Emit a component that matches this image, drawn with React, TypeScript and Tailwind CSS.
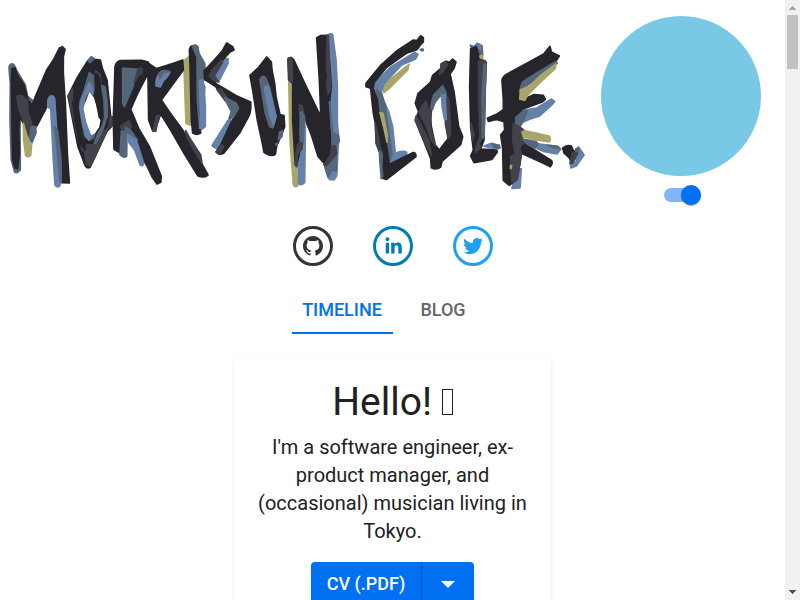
import { useState } from "react";

const INK = "#25252b";
const SOOT = "#42424b";
const SLATE = "#566679";
const BLUE = "#6681a9";
const OLIVE = "#a8a66b";

type Mark = [string, string];

// Brush marks, painted back to front. x is the group's offset on the canvas.
const artwork: { x: number; marks: Mark[] }[] = [
  {
    x: 0,
    marks: [
      [SLATE, "M27 142Q29 130 38 132Q45 135 49 150L76 195L82 228L98 242L100 300L60 290L61 450Q50 462 44 456L34 420L30 300L31 190Z"],
      [INK, "M36 146L45 144L52 165L72 195L84 240L96 256L108 225L140 150L160 120L178 84L187 80L195 88L190 110L190 160L196 250L202 400L208 489L184 488L178 440L168 320L166 240L158 226L146 232L140 262L112 315L88 350L70 310L60 290L56 330L58 400L53 446L45 444L38 420L36 300L34 180Z"],
      [SOOT, "M50 228L66 226L82 242L84 275L92 300L96 318L98 350L90 366L80 340L66 290L56 265Z"],
      [SLATE, "M94 320L107 320L108 338L96 368L88 355Z"],
      [OLIVE, "M70 310L80 345L90 368L95 374L92 406Q84 414 77 406L71 360Z"],
      [BLUE, "M144 240Q148 226 158 228Q166 232 165 250L170 330L182 440L180 497Q172 505 165 496L160 420L154 300L152 266L143 261Z"],
      [SLATE, "M164 320L173 332L183 420L184 486L180 484L172 400Z"],
      [INK, "M204 228L232 172L262 124L274 111L284 118L301 120L307 145L321 180L328 250L332 290L340 292L336 318L320 335L284 413L270 442Q262 447 256 438L234 380L220 310ZM268 210L246 265L253 300L260 330L274 350L287 342L300 322L304 300L296 270L284 232Z"],
      [SLATE, "M264 122L274 111L282 117L270 128Z"],
      [SOOT, "M206 225L218 208L217 235L228 290L244 345L256 385L247 393L229 335ZM252 376L284 374L310 337L326 322L284 410L270 438L259 434ZM286 152L300 162L303 190L300 240L292 230L286 200Z"],
      [INK, "M218 245L228 262L230 290L238 310L242 345L254 370L256 390L240 372L228 320ZM288 160L298 175L302 200L300 236L306 250L306 300L298 292L290 250L282 215Z"],
      [SLATE, "M268 158L279 166L282 205L279 224L268 210L254 235L247 265L254 300L261 330L274 350L284 344L279 355L268 360L255 350L247 310L240 270L240 245L251 215Z"],
      [SLATE, "M305 197L315 200L322 250L322 288L307 333L287 369L283 370L293 342L308 317L314 290L312 240Z"],
      [BLUE, "M268 188L278 206L278 222L268 210L254 235L248 265L256 305L272 348L267 360L256 345L246 300L240 262L244 240Z"],
      [SOOT, "M331 289L342 292L336 316L327 320Z"],
      [INK, "M345 141Q348 124 362 122L425 121L444 126L458 150L440 168L413 220L392 268L416 325L448 380L484 470L482 487L471 492L456 470L442 440L427 415L402 355L387 330L363 325L362 400L342 388L340 300Z"],
      [SLATE, "M368 144L414 148L422 154L404 178L399 200L385 232L373 260L368 250Z"],
      [SOOT, "M413 150L425 144L426 156L411 172L403 188ZM362 318L387 303L394 320L380 338L366 333Z"],
      [SLATE, "M364 334L381 334L380 409Q370 415 360 404ZM376 322L391 330L412 360L400 366L382 346Z"],
      [BLUE, "M383 344L409 360L431 430Q429 440 421 436L404 390L387 368Z"],
    ],
  },
  {
    x: 420,
    marks: [
      [OLIVE, "M131 122L150 108L153 314Q146 316 138 309L134 200Z"],
      [INK, "M0 126L22 128L50 146L100 130L128 120L130 150L108 180L64 240L88 275L128 330L168 400L204 465Q190 476 173 467L132 400L92 330L62 282L49 320L47 332L38 332L26 300L24 170L16 160L0 190Z"],
      [SOOT, "M0 143L7 146L5 160L0 164ZM50 287L58 287L51 312L47 334L39 333ZM137 332L149 354L182 405L186 430L162 390L140 350Z"],
      [BLUE, "M48 185Q54 154 72 152L90 156L82 170L70 182L61 201L48 198Z"],
      [SLATE, "M56 163Q64 152 74 152L88 154L70 158L60 176Z"],
      [INK, "M148 90Q151 76 160 78L173 100L173 250L182 339Q170 347 158 339L154 300L150 130Z"],
      [SLATE, "M157 78Q168 71 174 82L177 100L194 130L196 160L189 190L194 200L191 320L179 326L177 300L172 240L171 110Z"],
      [BLUE, "M178 180L189 180L196 260L196 319L186 328L180 324L182 280Z"],
      [BLUE, "M216 377L263 302L272 296L270 320L238 389L222 382ZM210 172L251 117L264 116L264 130L236 185L216 182Z"],
      [INK, "M192 153L217 126L246 94L260 69L278 80L282 90L270 96L254 114L206 168L231 193L289 227L332 246Q334 270 328 285L299 339L251 400Q237 407 228 396L242 375L272 310L292 275L270 243L236 214L227 200L194 179Z"],
      [SOOT, "M208 168L216 151L245 121L248 126L223 168L236 186L216 178ZM230 207L243 207L261 234L283 248L275 250L256 243ZM229 395L244 375L251 380L238 403Z"],
      [SLATE, "M253 232L289 250L296 265L279 293L267 296L274 275L263 254Z"],
      [INK, "M330 166L356 142L380 111L394 126L396 150L404 190L408 230L420 284L432 287L434 320L422 350L410 378L406 403Q394 412 372 397L368 375L352 300L338 210Z"],
      [SLATE, "M360 180Q366 161 377 174L388 200L408 290L399 323L389 320L376 280ZM418 337L428 332L426 350L415 360ZM406 372L412 370L410 376Z"],
      [BLUE, "M373 205Q381 190 388 206L408 290L400 315L390 288Z"],
    ],
  },
  {
    x: 810,
    marks: [
      [BLUE, "M174 44Q182 39 188 44L198 120L202 200L202 310L206 350L200 468L192 480L178 478L172 460L178 300Z"],
      [OLIVE, "M56 170L68 188L68 330L78 440L83 498Q74 503 70 495L60 360Z"],
      [INK, "M140 53L151 47L171 46L178 120L184 200L178 250L180 330L188 350L198 400L168 436L144 409L124 345L106 300L97 258L86 258L90 350L94 380L81 438L76 436L68 300L68 190L56 179L54 116Q63 108 71 119L107 196L149 283L152 275L148 180Z"],
      [SOOT, "M54 119Q60 109 66 116L67 184L58 182ZM171 46L175 46L178 130L182 205L174 222L170 190L174 170L170 150ZM88 254L97 257L103 290L96 276L88 275Z"],
      [SLATE, "M178 245L188 337L205 346L208 364L198 378L200 453L186 450L174 472L164 440L186 400L186 350Z"],
      [SOOT, "M184 378L197 378L200 402L170 436L161 434L182 405Z"],
      [BLUE, "M94 276L103 291L106 330L104 487Q95 497 86 492L84 440L94 400Z"],
      [SLATE, "M91 278L103 290L99 370L92 392L90 340Z"],
      [SOOT, "M84 372L95 368L96 386L83 402L80 440L77 436L78 400Z"],
      [OLIVE, "M338 210L349 187L417 133L413 150L359 204L342 218Z"],
      [BLUE, "M312 192L361 142L435 97L444 103L437 117L395 135L343 190L334 215L342 245L356 275L368 320L376 400Q398 390 410 397L409 409L362 438L352 390L334 300L322 230Z"],
      [SLATE, "M320 208L334 223L346 255L348 280L356 330L366 405L359 420L352 350L340 280L326 272ZM451 88L459 87L460 91L454 92Z"],
      [INK, "M288 190L331 137L381 92L430 60L440 62L452 47L460 53L460 66L451 75L441 89L409 100L349 143L312 188L310 205L322 240L326 278L343 330L358 433L428 398Q438 395 438 410L350 478L334 474L338 460L330 400L320 370L316 310L310 280L302 205L288 200Z"],
      [SOOT, "M316 312L323 340L329 378L338 400L328 394L318 370Z"],
      [SLATE, "M328 393L337 404L335 440L338 470L334 475L330 430Z"],
      [OLIVE, "M330 278L339 280L352 345L351 367L343 330Z"],
    ],
  },
  {
    x: 1200,
    marks: [
      [INK, "M46 250L54 221L92 186L98 166L122 146L124 131L138 124L148 127L158 117L168 126L162 145L150 162L162 215L176 320L188 350L182 374L126 424L122 441Q108 451 94 443L92 415L64 345L46 300L56 275ZM126 220L102 250L90 280L94 320L106 376L118 390L144 356L142 330L136 290L136 250Z"],
      [SOOT, "M124 132L138 126L142 135L126 158L119 163L122 146ZM62 265L78 242L84 265L94 275L91 320L105 376L92 358L80 320L58 280ZM48 288L66 320L87 365L94 406L66 350L46 302ZM139 227L147 240L152 344L144 354L136 310Z"],
      [SLATE, "M100 226L128 197L138 218L138 233L124 223L106 244L97 270L92 262Z"],
      [BLUE, "M124 226L135 224L139 299L134 300L127 265Z"],
      [SLATE, "M211 76L222 80L232 70L246 77L248 105L240 110L230 84L214 82Z"],
      [BLUE, "M230 74Q238 68 242 77L242 90L236 84Z"],
      [INK, "M212 86L229 80L238 113L258 126L256 200L252 360L242 387L290 390L292 396L276 418L222 428L212 408L220 390L212 320L209 200Z"],
      [SOOT, "M236 124L255 122L258 140L256 190L249 205L244 360L237 370L242 382L226 398L228 382L240 350L236 240ZM213 310L222 345L217 362Z"],
      [SLATE, "M252 132L257 132L256 185L252 350L247 355L246 230Z"],
      [OLIVE, "M240 108L248 106L248 116L241 114Z"],
      [BLUE, "M252 378L275 370L298 377L296 386L266 383Z"],
      [SLATE, "M276 372L298 376L300 384L288 386Z"],
      [BLUE, "M336 505L340 486L352 470L356 447L364 446L360 504Z"],
      [INK, "M306 181Q306 172 321 162L386 127L431 102L450 79L454 96L478 108L469 122L399 163L366 185L356 215L362 242L400 224L430 226L436 238L427 246L371 266L343 295L343 310L370 330L366 350L373 370L454 421Q460 430 451 440L430 430L364 400L360 430L350 479L328 496L310 481L308 385L302 345L314 330L312 305L290 298L265 304L262 295L291 282L310 269L310 240Z"],
      [SLATE, "M358 215L367 187L385 174L465 126L472 129L404 180L370 205Z"],
      [OLIVE, "M359 237L362 209L391 197L421 167L468 132L466 145L424 184L384 224L374 241Z"],
      [BLUE, "M362 282L373 270L410 264L455 237L464 245L454 256L419 288L389 298L362 310Z"],
      [SLATE, "M347 293L372 270L382 273L372 300L360 320L347 308Z"],
      [SOOT, "M340 310L359 321L372 331L363 345L370 370L358 382L364 403L351 480L336 486L332 410L346 400L338 360Z"],
      [OLIVE, "M366 336Q371 330 384 334L447 348Q454 353 448 366L410 360L370 351ZM332 436L335 437L333 446L331 445Z"],
      [BLUE, "M386 366L420 372L474 380L482 388L471 402L430 394L388 376Z"],
      [SLATE, "M368 357L409 365L414 372L405 384L380 371ZM442 376L471 378L480 386L462 384Z"],
      [BLUE, "M522 395L536 381L552 405L529 438L513 444L510 431L530 425Z"],
      [INK, "M488 384Q500 373 514 378L520 391L532 399L516 430L508 414L492 399Z"],
      [SOOT, "M518 397L532 401L519 428L510 429Z"],
      [SLATE, "M528 386L535 383L536 396L527 394Z"],
    ],
  },
];

function Wordmark() {
  return (
    <svg viewBox="24 -12 1731 540" className="min-w-0 flex-1" role="img" aria-label="Morrison Cole">
      {artwork.map(group => (
        <g key={group.x} transform={`translate(${group.x} 0)`} strokeWidth="5" strokeLinejoin="round">
          {group.marks.map(([color, d], i) => (
            <path key={i} d={d} fill={color} stroke={color} fillRule="evenodd" />
          ))}
        </g>
      ))}
    </svg>
  );
}

function ThemeSwitch() {
  const [on, setOn] = useState(true);
  return (
    <label className="relative mt-2 flex h-[22px] w-[34px] cursor-pointer items-center">
      <input
        type="checkbox"
        role="switch"
        aria-label="Animate background"
        checked={on}
        onChange={e => setOn(e.target.checked)}
        className="peer h-3.5 w-[34px] appearance-none rounded-full bg-black/40 checked:bg-[#80b6f9]"
      />
      <span className="pointer-events-none absolute -left-[3px] size-5 rounded-full bg-gray-100 shadow-[0_2px_1px_-1px_rgba(0,0,0,0.2),0_1px_1px_rgba(0,0,0,0.14),0_1px_3px_rgba(0,0,0,0.12)] peer-checked:left-[17px] peer-checked:bg-[#0070f3]" />
    </label>
  );
}

const socials = [
  {
    name: "GitHub",
    href: "#github",
    style: "text-[#333333]",
    d: "M32,16c-8.8,0-16,7.2-16,16c0,7.1,4.6,13.1,10.9,15.2c0.8,0.1,1.1-0.3,1.1-0.8c0-0.4,0-1.4,0-2.7c-4.5,1-5.4-2.1-5.4-2.1c-0.7-1.8-1.8-2.3-1.8-2.3c-1.5-1,0.1-1,0.1-1c1.6,0.1,2.5,1.6,2.5,1.6c1.4,2.4,3.7,1.7,4.7,1.3c0.1-1,0.6-1.7,1-2.1c-3.6-0.4-7.3-1.8-7.3-7.9c0-1.7,0.6-3.2,1.6-4.3c-0.2-0.4-0.7-2,0.2-4.2c0,0,1.3-0.4,4.4,1.6c1.3-0.4,2.6-0.5,4-0.5c1.4,0,2.7,0.2,4,0.5c3.1-2.1,4.4-1.6,4.4-1.6c0.9,2.2,0.3,3.8,0.2,4.2c1,1.1,1.6,2.5,1.6,4.3c0,6.1-3.7,7.5-7.3,7.9c0.6,0.5,1.1,1.5,1.1,3c0,2.1,0,3.9,0,4.4c0,0.4,0.3,0.9,1.1,0.8C43.4,45.1,48,39.1,48,32C48,23.2,40.8,16,32,16z",
  },
  {
    name: "LinkedIn",
    href: "#linkedin",
    style: "text-[#007bb6]",
    d: "M20.4,44h5.4V26.6h-5.4V44z M23.1,18c-1.7,0-3.1,1.4-3.1,3.1c0,1.7,1.4,3.1,3.1,3.1c1.7,0,3.1-1.4,3.1-3.1C26.2,19.4,24.8,18,23.1,18z M39.5,26.2c-2.6,0-4.4,1.4-5.1,2.8h-0.1v-2.4h-5.2V44h5.4v-8.6c0-2.3,0.4-4.5,3.2-4.5c2.8,0,2.8,2.6,2.8,4.6V44H46v-9.5C46,29.8,45,26.2,39.5,26.2z",
  },
  {
    name: "Twitter",
    href: "#twitter",
    style: "text-[#1da1f2]",
    d: "M48,22.1c-1.2,0.5-2.4,0.9-3.8,1c1.4-0.8,2.4-2.1,2.9-3.6c-1.3,0.8-2.7,1.3-4.2,1.6C41.7,19.8,40,19,38.2,19c-3.6,0-6.6,2.9-6.6,6.6c0,0.5,0.1,1,0.2,1.5c-5.5-0.3-10.3-2.9-13.5-6.9c-0.6,1-0.9,2.1-0.9,3.3c0,2.3,1.2,4.3,2.9,5.5c-1.1,0-2.1-0.3-3-0.8c0,0,0,0.1,0,0.1c0,3.2,2.3,5.8,5.3,6.4c-0.6,0.1-1.1,0.2-1.7,0.2c-0.4,0-0.8,0-1.2-0.1c0.8,2.6,3.3,4.5,6.1,4.6c-2.2,1.8-5.1,2.8-8.2,2.8c-0.5,0-1.1,0-1.6-0.1c2.9,1.9,6.4,2.9,10.1,2.9c12.1,0,18.7-10,18.7-18.7c0-0.3,0-0.6,0-0.8C46,24.5,47.1,23.4,48,22.1z",
  },
];

function Scrollbar() {
  return (
    <div aria-hidden="true" className="flex w-[15px] shrink-0 flex-col items-center justify-between bg-[#f1f1f1]">
      <div className="flex flex-col items-center">
        <svg width="15" height="15" shapeRendering="crispEdges">
          <path d="M4 10h7v-1h-1v-1h-1v-1h-1v-1h-1v1h-1v1h-1v1h-1z" fill="#a3a3a3" />
        </svg>
        <div className="h-[54px] w-[11px] bg-[#c1c1c1]" />
      </div>
      <svg width="15" height="15" shapeRendering="crispEdges">
        <path d="M4 5h7v1h-1v1h-1v1h-1v1h-1v-1h-1v-1h-1v-1h-1z" fill="#505050" />
      </svg>
    </div>
  );
}

export default function App() {
  const [tab, setTab] = useState("Timeline");

  return (
    <div className="flex h-screen overflow-hidden bg-white font-[Roboto,sans-serif] text-[#212121]">
      <main className="flex min-w-0 flex-1 flex-col items-center">
        <header className="flex w-full items-start gap-4 pt-4 pr-6 pl-2">
          <Wordmark />
          <div className="flex shrink-0 flex-col items-center">
            <div className="size-40 rounded-full bg-[#78c8e6]" />
            <ThemeSwitch />
          </div>
        </header>

        <nav aria-label="Social" className="mt-5 flex gap-10">
          {socials.map(s => (
            <a key={s.name} href={s.href} aria-label={s.name} className={`size-10 ${s.style}`}>
              <svg viewBox="0 0 64 64" className="size-10" fill="currentColor">
                <circle cx="32" cy="32" r="29.6" fill="none" stroke="currentColor" strokeWidth="4.8" />
                <path d={s.d} />
              </svg>
            </a>
          ))}
        </nav>

        <div role="tablist" className="mt-5 flex">
          {["Timeline", "Blog"].map(t => (
            <button
              key={t}
              role="tab"
              aria-selected={tab === t}
              onClick={() => setTab(t)}
              className={`h-12 w-[101px] border-b-2 pt-0.5 text-lg font-medium uppercase ${
                tab === t ? "border-[#0070f3] text-[#0070f3]" : "border-transparent text-[#666666]"
              }`}
            >
              {t}
            </button>
          ))}
        </div>

        <section className="mt-6 flex w-[317px] shrink-0 flex-col items-center rounded px-4 pt-[18px] pb-8 text-center shadow-[0_2px_1px_-1px_rgba(0,0,0,0.06),0_1px_1px_rgba(0,0,0,0.05),0_1px_3px_rgba(0,0,0,0.12)]">
          <h1 className="text-[39px] leading-[53px]">
            Hello! <span role="img" aria-label="wave" className="inline-block h-[26px] w-[11px] border border-[#212121]" />
          </h1>
          <p className="mt-1 text-xl leading-7">
            I'm a software engineer, ex-product manager, and (occasional) musician living in Tokyo.
          </p>
          <div className="mt-[17px] flex h-11 overflow-hidden rounded bg-[#0070f3] text-lg font-medium text-white shadow-md">
            <button className="border-r border-[#004eaa] px-4">CV (.PDF)</button>
            <button aria-label="More formats" className="flex w-[52px] items-center justify-center">
              <svg width="14" height="8" viewBox="0 0 14 8">
                <path d="M0 1h14l-7 7z" fill="currentColor" />
              </svg>
            </button>
          </div>
        </section>
      </main>
      <Scrollbar />
    </div>
  );
}
